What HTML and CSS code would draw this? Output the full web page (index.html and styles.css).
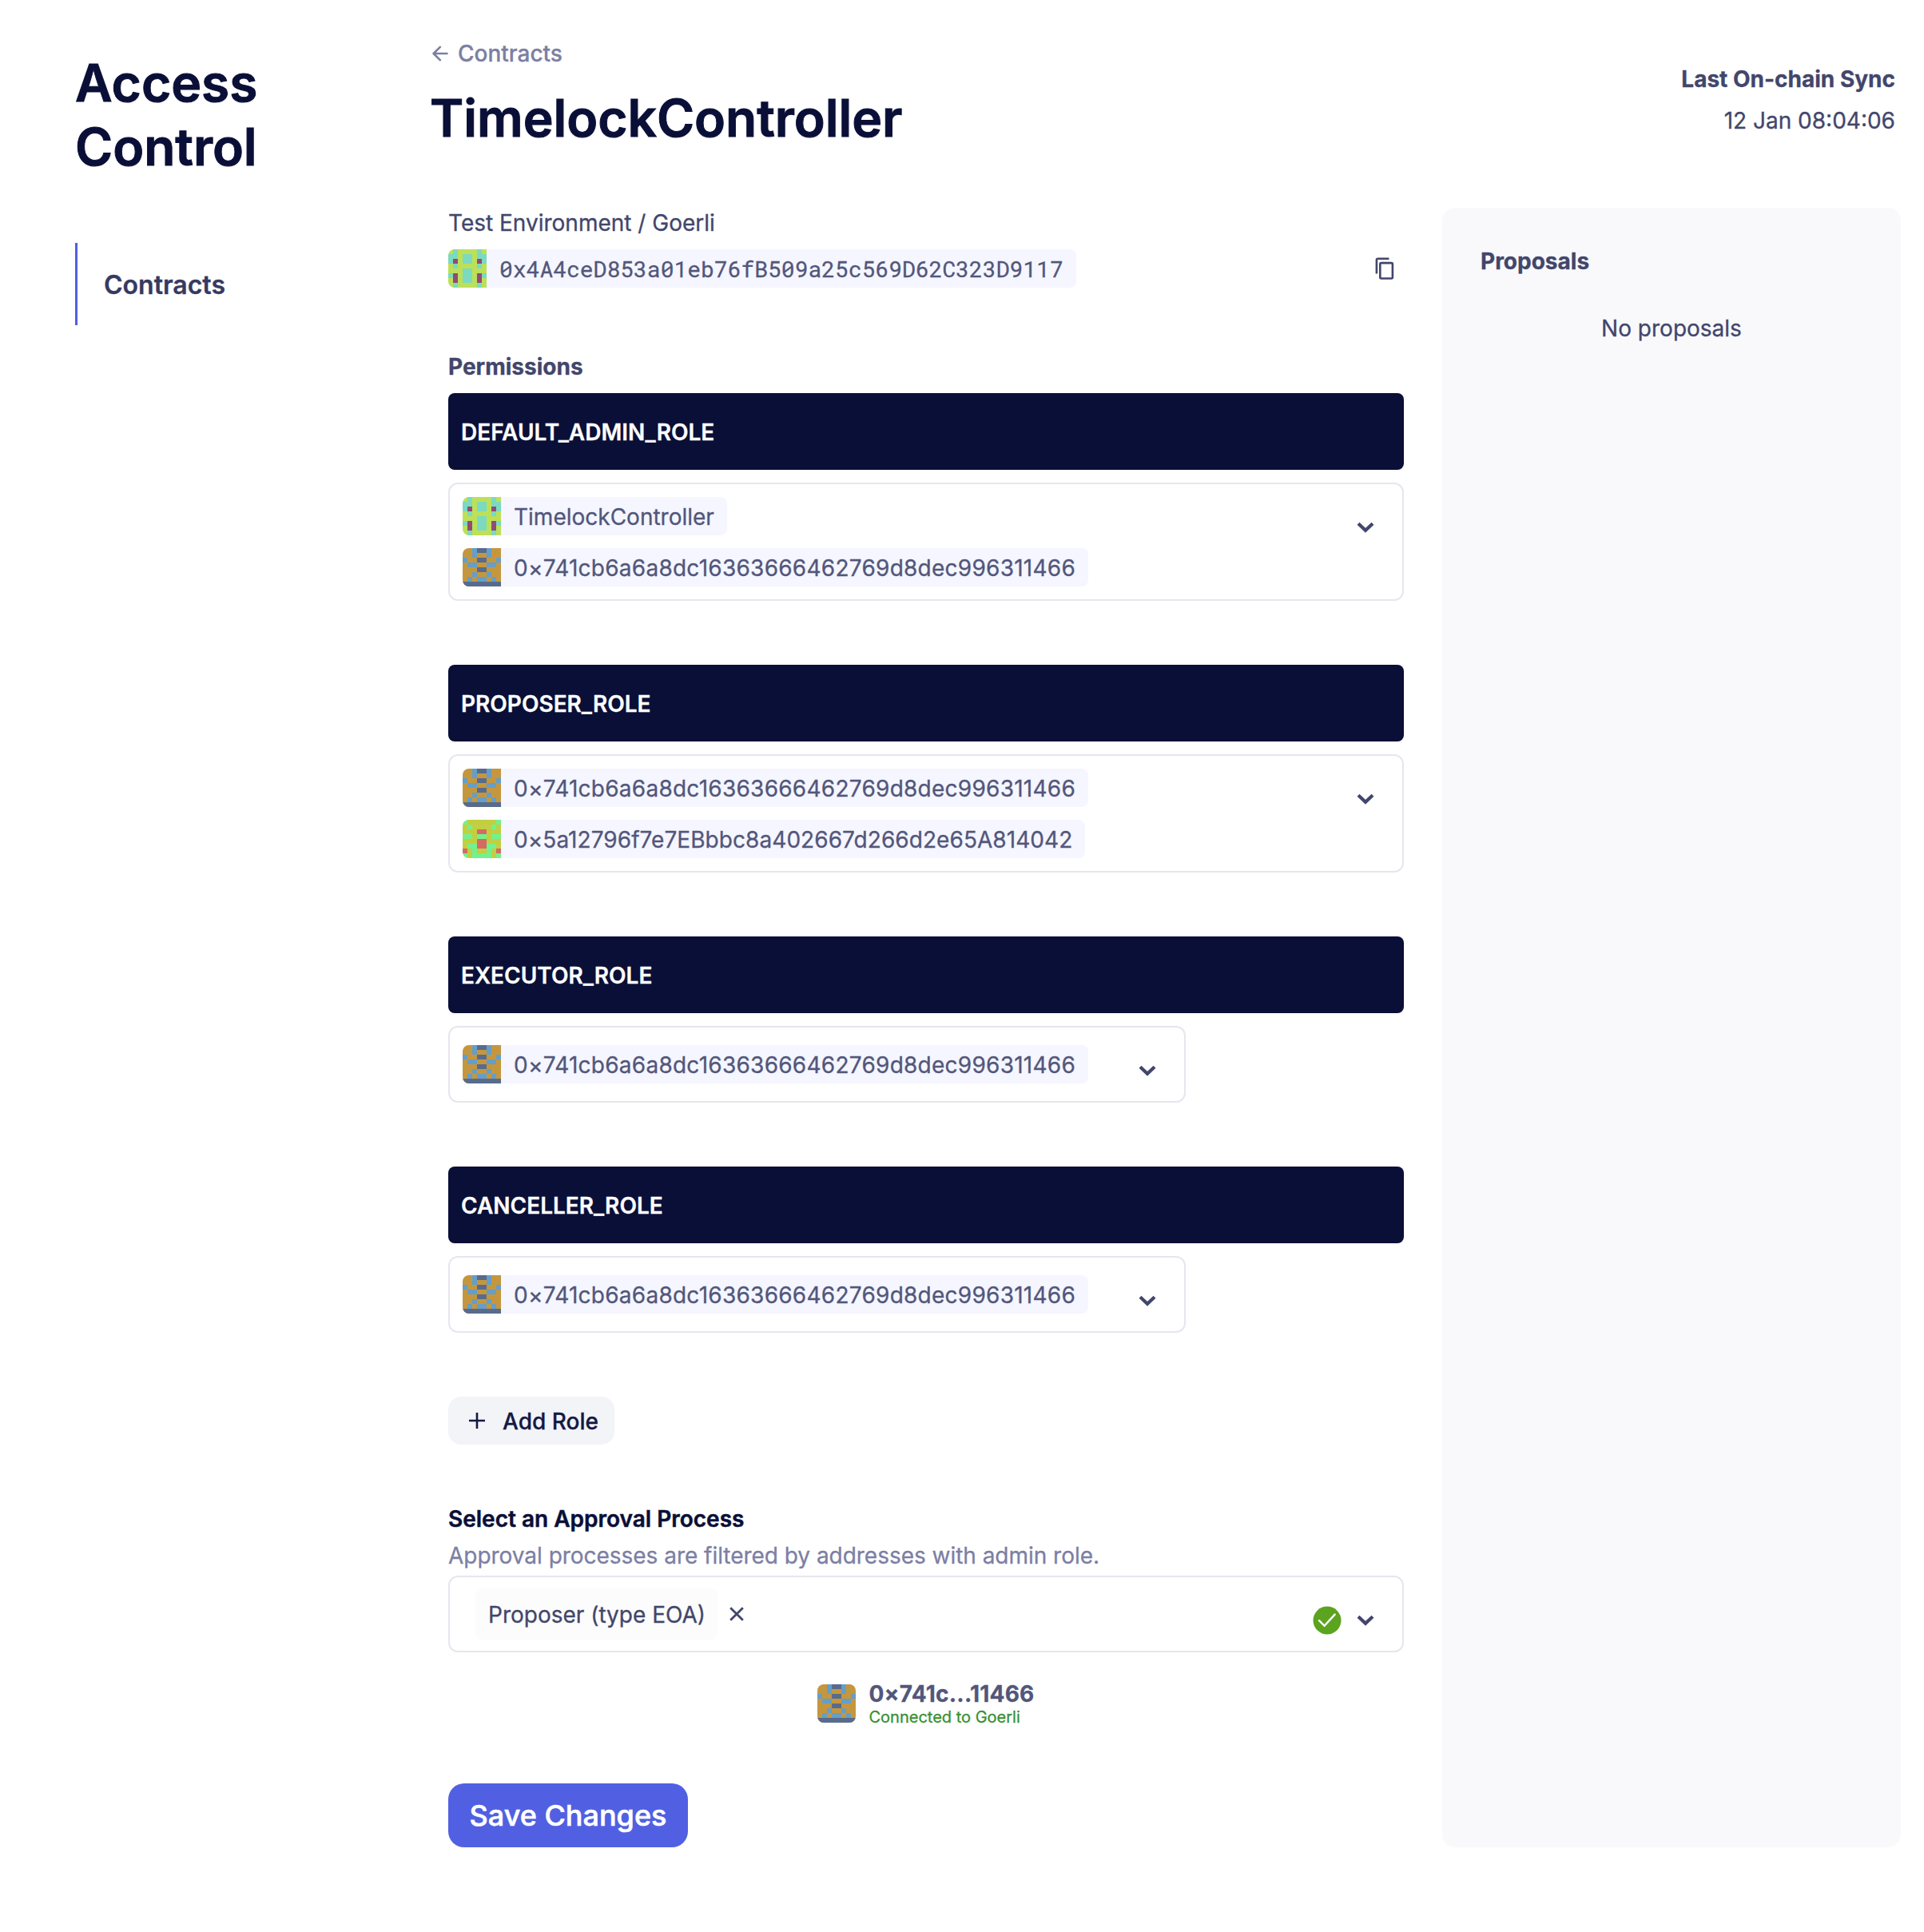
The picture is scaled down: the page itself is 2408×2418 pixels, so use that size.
FILE: index.html
```html
<!DOCTYPE html>
<html lang="en">
<head>
<meta charset="utf-8">
<title>Access Control</title>
<link rel="stylesheet" href="styles.css">
</head>
<body>
<svg class="sprite" aria-hidden="true">
  <symbol id="id-green" viewBox="0 0 8 8">
    <path fill="#bde058" d="M0 0h8v8H0z"/>
    <path fill="#7bdabf" d="M1 0h1v4H1zM6 0h1v4H6zM0 1h1v2H0zM7 1h1v2H7zM3 1h2v2H3zM3 4h2v3H3zM0 5h1v1H0zM7 5h1v1H7zM1 7h1v1H1zM6 7h1v1H6z"/>
    <path fill="#8f4c76" d="M1 2h1v1H1zM6 2h1v1H6zM1 5h1v2H1zM6 5h1v2H6z"/>
  </symbol>
  <symbol id="id-amber" viewBox="0 0 8 8">
    <path fill="#c4973e" d="M0 0h8v8H0z"/>
    <path fill="#659ec9" d="M2 0h1v2H2zM5 0h1v2H5zM0 2h1v1H0zM7 2h1v1H7zM1 3h2v1H1zM5 3h2v1H5zM2 5h1v1H2zM5 5h1v1H5zM1 6h1v1H1zM6 6h1v1H6zM3 6h2v1H3z"/>
    <path fill="#586b8c" d="M3 0h2v1H3zM3 2h2v1H3zM3 4h2v1H3zM0 7h8v1H0z"/>
  </symbol>
  <symbol id="id-lime" viewBox="0 0 8 8">
    <path fill="#c2cf40" d="M0 0h8v8H0z"/>
    <path fill="#74f18c" d="M0 0h1v1H0zM7 0h1v1H7zM1 1h1v1H1zM6 1h1v1H6zM0 3h2v1H0zM6 3h2v1H6zM3 3h2v1H3zM1 5h2v1H1zM5 5h2v1H5zM2 6h1v1H2zM5 6h1v1H5zM0 7h1v1H0zM7 7h1v1H7zM2 7h4v1H2z"/>
    <path fill="#d56a62" d="M3 2h2v1H3zM3 4h2v2H3zM0 6h1v1H0zM7 6h1v1H7z"/>
  </symbol>
  <symbol id="chevron" viewBox="0 0 22 14">
    <path d="M2 2.2 11 10.8 20 2.2" fill="none" stroke="currentColor" stroke-width="4.2"/>
  </symbol>
</svg>

<div class="page">
  <aside class="sidebar">
    <h2 class="brand">Access<br>Control</h2>
    <nav class="nav"><a class="nav-item">Contracts</a></nav>
  </aside>

  <div class="content">
    <header class="header">
      <div>
        <a class="back">
          <svg class="back-icon" viewBox="0 0 20 20" fill="none" stroke="currentColor" stroke-width="2.6" stroke-linecap="round" stroke-linejoin="round"><path d="M18.5 10H2M9.8 1.8 1.6 10l8.2 8.2"/></svg>
          <span>Contracts</span>
        </a>
        <h1 class="title">TimelockController</h1>
      </div>
      <div class="sync">
        <strong>Last On-chain Sync</strong>
        <span>12 Jan 08:04:06</span>
      </div>
    </header>

    <div class="columns">
      <main class="form">
        <div class="network">Test Environment / Goerli</div>
        <div class="address-row">
          <div class="chip mono"><svg class="avatar"><use href="#id-green"/></svg><span>0x4A4ceD853a01eb76fB509a25c569D62C323D9117</span></div>
          <svg class="copy" viewBox="0 0 24 28" fill="none" stroke="currentColor" stroke-width="2.6"><rect x="6.3" y="7.1" width="15.6" height="19.4" rx="1.4"/><path d="M1.9 20.5V3.2c0-.8.6-1.4 1.4-1.4H17.4"/></svg>
        </div>

        <h3 class="label">Permissions</h3>

        <section class="role">
          <div class="role-name"><span>DEFAULT_ADMIN_ROLE</span></div>
          <div class="select">
            <div class="chips">
              <div class="chip"><svg class="avatar"><use href="#id-green"/></svg><span>TimelockController</span></div>
              <div class="chip hash"><svg class="avatar"><use href="#id-amber"/></svg><span>0×741cb6a6a8dc16363666462769d8dec996311466</span></div>
            </div>
            <svg class="chevron high"><use href="#chevron"/></svg>
          </div>
        </section>

        <section class="role">
          <div class="role-name"><span>PROPOSER_ROLE</span></div>
          <div class="select">
            <div class="chips">
              <div class="chip hash"><svg class="avatar"><use href="#id-amber"/></svg><span>0×741cb6a6a8dc16363666462769d8dec996311466</span></div>
              <div class="chip hash-mixed"><svg class="avatar"><use href="#id-lime"/></svg><span>0×5a12796f7e7EBbbc8a402667d266d2e65A814042</span></div>
            </div>
            <svg class="chevron high"><use href="#chevron"/></svg>
          </div>
        </section>

        <section class="role">
          <div class="role-name"><span>EXECUTOR_ROLE</span></div>
          <div class="select narrow">
            <div class="chip hash"><svg class="avatar"><use href="#id-amber"/></svg><span>0×741cb6a6a8dc16363666462769d8dec996311466</span></div>
            <svg class="chevron"><use href="#chevron"/></svg>
          </div>
        </section>

        <section class="role">
          <div class="role-name"><span>CANCELLER_ROLE</span></div>
          <div class="select narrow">
            <div class="chip hash"><svg class="avatar"><use href="#id-amber"/></svg><span>0×741cb6a6a8dc16363666462769d8dec996311466</span></div>
            <svg class="chevron"><use href="#chevron"/></svg>
          </div>
        </section>

        <button class="add-role"><svg class="plus" viewBox="0 0 20 20" stroke="currentColor" stroke-width="2.6"><path d="M10 0v20M0 10h20"/></svg><span>Add Role</span></button>

        <h3 class="approval-title">Select an Approval Process</h3>
        <p class="hint">Approval processes are filtered by addresses with admin role.</p>
        <div class="select approval">
          <div class="tag"><span>Proposer (type EOA)</span></div>
          <svg class="clear" viewBox="0 0 18 18" stroke="currentColor" stroke-width="2.8"><path d="M1.2 1.2l15.6 15.6M16.8 1.2 1.2 16.8"/></svg>
          <svg class="check" viewBox="0 0 36 36"><circle cx="18" cy="18" r="17.5" fill="#5ca320"/><path d="M8 18.2l6.6 6.6L27.6 10.6" fill="none" stroke="#fff" stroke-width="2.4" stroke-linecap="round"/></svg>
          <svg class="chevron"><use href="#chevron"/></svg>
        </div>

        <div class="wallet">
          <svg class="avatar"><use href="#id-amber"/></svg>
          <div class="wallet-text">
            <strong>0×741c...11466</strong>
            <small>Connected to Goerli</small>
          </div>
        </div>

        <button class="save">Save Changes</button>
      </main>

      <aside class="proposals">
        <h3>Proposals</h3>
        <p>No proposals</p>
      </aside>
    </div>
  </div>
</div>
</body>
</html>
```
FILE: styles.css
```css
* { box-sizing: border-box; }
body {
  margin: 0;
  background: #fff;
  color: #42466b;
  font: 400 28px/40px Inter, "Liberation Sans", sans-serif;
  -webkit-text-stroke-width: 0.3px;
}
h1, h2, h3, p { margin: 0; }
button { border: 0; font: inherit; }
svg { display: block; flex: none; }
.sprite { position: absolute; width: 0; height: 0; }

.page { display: flex; width: 2408px; height: 2418px; }

.sidebar { width: 538px; padding: 64px 0 0 94px; }
.brand { font-size: 64px; line-height: 80px; font-weight: 600; color: #0a0f37; -webkit-text-stroke-width: 1px; }
.nav { margin-top: 80px; }
.nav-item {
  display: flex;
  align-items: center;
  height: 103px;
  padding: 2px 0 0 33px;
  border-left: 3px solid #4f5fe3;
  font-size: 32px;
  font-weight: 600;
  color: #363a61;
}

.content { flex: 1; }
.header { display: flex; justify-content: space-between; height: 260px; padding: 47px 36px 0 0; }
.back { display: flex; align-items: center; color: #7c7fa3; font-weight: 500; }
.back-icon { width: 20px; height: 20px; margin: 0 12px 0 3px; }
.title { margin-top: 21px; font-size: 64px; line-height: 80px; font-weight: 600; color: #0a0f37; -webkit-text-stroke-width: 1px; }
.sync { display: flex; flex-direction: column; gap: 12px; padding-top: 32px; text-align: right; }
.sync strong { font-weight: 700; }

.columns { display: flex; gap: 48px; padding-left: 23px; }
.form { width: 1196px; }
.network { line-height: 38px; }
.address-row { display: flex; justify-content: space-between; align-items: center; margin-top: 14px; padding-right: 12px; }
.copy { width: 24px; height: 28px; }

.avatar { width: 48px; height: 48px; }
.chip {
  display: flex;
  align-items: center;
  gap: 16px;
  width: max-content;
  height: 48px;
  padding-right: 16px;
  overflow: hidden;
  border-radius: 8px;
  background: #f5f6ff;
  color: #52567b;
}
.chip span, .role-name span, .add-role span, .tag span { padding-top: 2px; }
.hash { letter-spacing: 0.25px; }
.hash-mixed { letter-spacing: 0.06px; }
.mono { font-family: "Roboto Mono", "Liberation Mono", monospace; }
.chips { display: flex; flex-direction: column; gap: 16px; }

.label { margin: 79px 0 13px; font-size: 28px; font-weight: 700; }
.role { margin-bottom: 80px; }
.role-name {
  display: flex;
  align-items: center;
  height: 96px;
  padding-left: 16px;
  margin-bottom: 16px;
  border-radius: 8px;
  background: #0a0f37;
  color: #fff;
  font-weight: 600;
}
.select {
  display: flex;
  align-items: center;
  justify-content: space-between;
  min-height: 96px;
  padding: 16px 35px 16px 16px;
  border: 2px solid #e6e6ee;
  border-radius: 12px;
  background: #fff;
}
.narrow { width: 923px; }
.chevron { width: 22px; height: 14px; margin-top: 16px; }
.chevron.high { margin: 0 0 36px; }

.add-role {
  display: flex;
  align-items: center;
  gap: 22px;
  width: 208px;
  height: 60px;
  padding: 0 0 0 26px;
  border-radius: 16px;
  background: #f3f4f8;
  color: #141944;
  font-weight: 500;
}
.plus { width: 20px; height: 20px; }

.approval-title { margin: 73px 0 6px; font-size: 28px; font-weight: 600; color: #0a0f37; -webkit-text-stroke-width: 0.5px; }
.hint { margin-bottom: 5px; color: #7c7fa3; letter-spacing: -0.03px; }
.approval { height: 96px; padding: 0 35px 0 32px; }
.tag { display: flex; align-items: center; width: 303px; height: 64px; padding-left: 16px; border-radius: 8px; background: #fcfcfc; }
.clear { width: 18px; height: 18px; margin: 0 auto 0 15px; }
.check { width: 36px; height: 36px; margin: 16px 19px 0 0; }

.wallet { display: flex; align-items: center; justify-content: center; gap: 16px; height: 48px; margin-top: 40px; color: #52567b; }
.wallet .avatar { border-radius: 8px; }
.wallet-text { display: flex; flex-direction: column; gap: 1px; padding-top: 1px; }
.wallet-text strong { line-height: 31px; font-weight: 700; letter-spacing: 0.22px; }
.wallet-text small { font-size: 20px; line-height: 24px; color: #38902f; }

.save {
  width: 300px;
  height: 80px;
  margin-top: 76px;
  padding: 0;
  border-radius: 20px;
  background: #5160e2;
  color: #fff;
  font-size: 36px;
  line-height: 44px;
  font-weight: 500;
  -webkit-text-stroke-width: 0.6px;
}

.proposals { width: 574px; height: 2052px; padding: 47px 48px; border-radius: 16px; background: #f9f9fc; }
.proposals h3 { font-size: 28px; font-weight: 700; }
.proposals p { margin-top: 44px; text-align: center; }
```
